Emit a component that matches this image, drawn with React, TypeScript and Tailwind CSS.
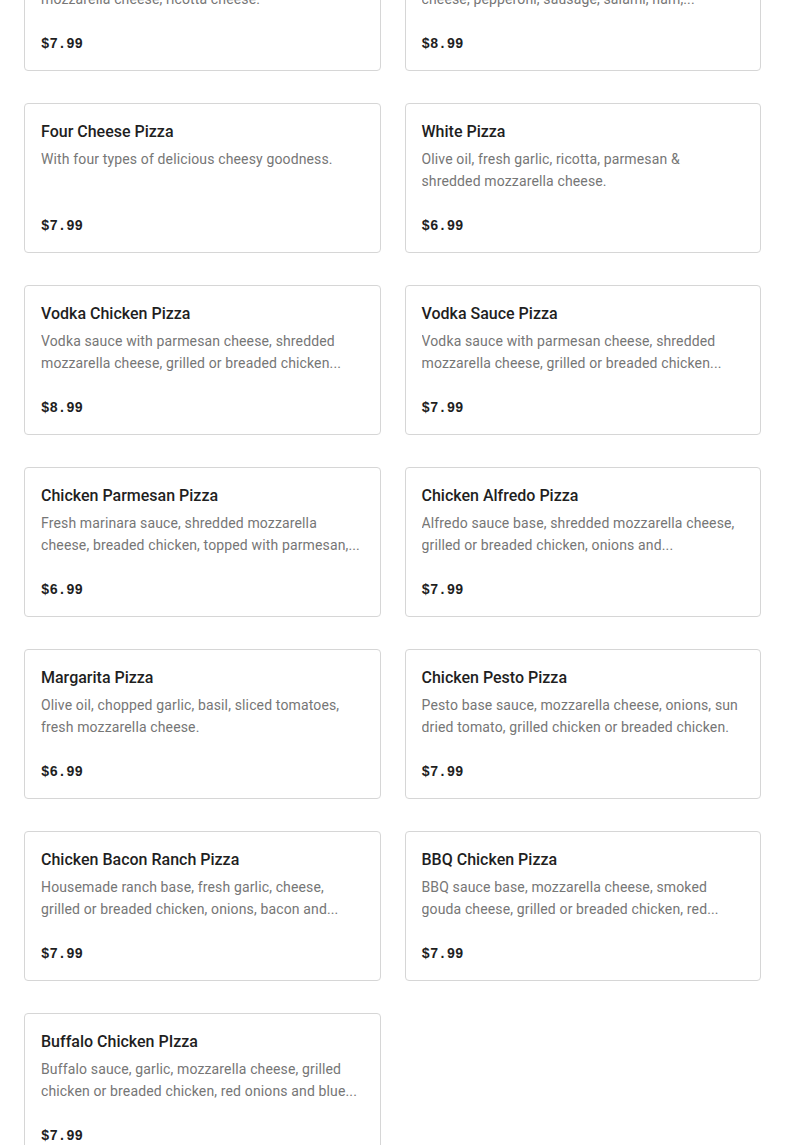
// descriptions are stored already cut the way the menu shows them
const items = [
  {
    name: "Ricotta Pizza",
    desc: "Fresh marinara sauce, garlic, basil, shredded mozzarella cheese, ricotta cheese.",
    price: "$7.99",
  },
  {
    name: "Meat Lovers Pizza",
    desc: "Fresh marinara sauce, shredded mozzarella cheese, pepperoni, sausage, salami, ham,...",
    price: "$8.99",
  },
  {
    name: "Four Cheese Pizza",
    desc: "With four types of delicious cheesy goodness.",
    price: "$7.99",
  },
  {
    name: "White Pizza",
    desc: "Olive oil, fresh garlic, ricotta, parmesan & shredded\u00a0mozzarella cheese.",
    price: "$6.99",
  },
  {
    name: "Vodka Chicken Pizza",
    desc: "Vodka sauce with parmesan cheese, shredded mozzarella cheese, grilled or breaded chicken...",
    price: "$8.99",
  },
  {
    name: "Vodka Sauce Pizza",
    desc: "Vodka sauce with parmesan cheese, shredded mozzarella cheese, grilled or breaded chicken...",
    price: "$7.99",
  },
  {
    name: "Chicken Parmesan Pizza",
    desc: "Fresh marinara sauce, shredded mozzarella cheese, breaded chicken, topped with parmesan,...",
    price: "$6.99",
  },
  {
    name: "Chicken Alfredo Pizza",
    desc: "Alfredo sauce base, shredded mozzarella cheese, grilled or breaded chicken, onions and...",
    price: "$7.99",
  },
  {
    name: "Margarita Pizza",
    desc: "Olive oil, chopped garlic, basil, sliced tomatoes, fresh mozzarella cheese.",
    price: "$6.99",
  },
  {
    name: "Chicken Pesto Pizza",
    desc: "Pesto base sauce, mozzarella cheese, onions, sun dried tomato, grilled chicken or breaded chicken.",
    price: "$7.99",
  },
  {
    name: "Chicken Bacon Ranch Pizza",
    desc: "Housemade ranch base, fresh garlic, cheese, grilled or breaded chicken, onions, bacon and...",
    price: "$7.99",
  },
  {
    name: "BBQ Chicken Pizza",
    desc: "BBQ sauce base, mozzarella cheese, smoked gouda cheese, grilled or breaded chicken, red...",
    price: "$7.99",
  },
  {
    name: "Buffalo Chicken PIzza",
    desc: "Buffalo sauce, garlic, mozzarella cheese, grilled chicken or breaded chicken, red onions and blue...",
    price: "$7.99",
  },
];

function MenuCard({ name, desc, price }: { name: string; desc: string; price: string }) {
  return (
    <div className="rounded-[4px] border border-[#d6d6d6] bg-white p-4">
      <h3 className="text-[16px] leading-6 font-medium text-[#1f1f1f]">{name}</h3>
      <p className="mt-1 h-[44px] text-[14px] leading-[22px] tracking-[0.01em] text-[#767676] line-clamp-2">
        {desc}
      </p>
      <div className="mt-6 text-[14px] leading-5 font-bold text-[#1f1f1f] font-['Liberation_Mono',monospace]">
        {price}
      </div>
    </div>
  );
}

export default function App() {
  return (
    <div className="h-[1145px] overflow-hidden bg-white font-['Roboto',sans-serif]">
      <div className="-mt-[79px] grid grid-cols-2 gap-x-6 gap-y-8 px-6">
        {items.map((item) => (
          <MenuCard key={item.name} {...item} />
        ))}
      </div>
    </div>
  );
}
